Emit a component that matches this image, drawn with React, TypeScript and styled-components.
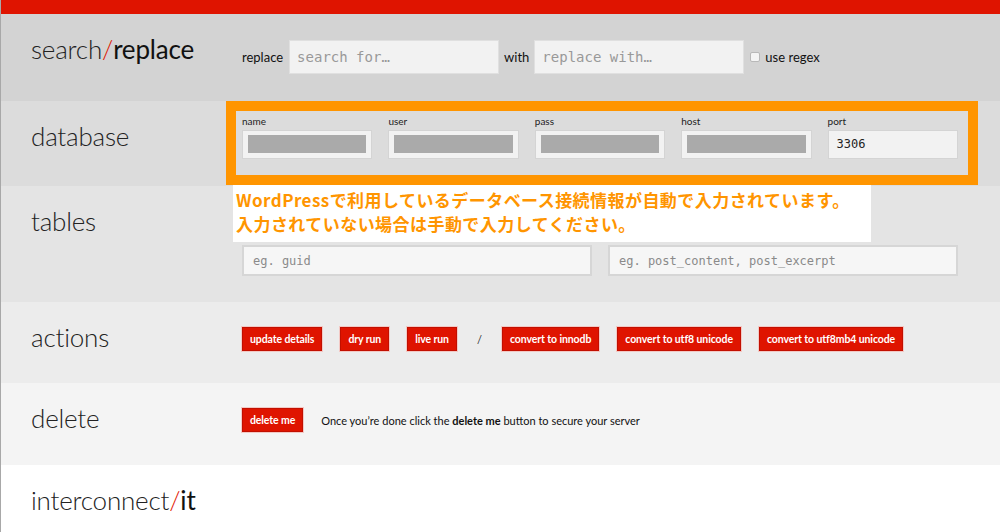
import styled, { createGlobalStyle } from 'styled-components'

const colors = {
    red: '#df1400',
    orange: '#ff9500',
    ink: '#1a1a1a',
    muted: '#8c8c8c',
}

const GlobalStyle = createGlobalStyle`
    html, body {
        margin: 0;
        padding: 0;
        background: #fff;
    }
    body {
        font-family: 'Lato', 'Liberation Sans', sans-serif;
        color: ${colors.ink};
        overflow: hidden;
    }
`

const Page = styled.div`
    width: 1000px;
    height: 532px;
    overflow: hidden;
    box-sizing: border-box;
    border-left: 1px solid #a8a8a8;
`

const TopBar = styled.div`
    height: 14px;
    background: ${colors.red};
`

const Section = styled.section<{ $bg: string; $h: number }>`
    position: relative;
    display: flex;
    align-items: flex-start;
    height: ${({ $h }) => $h}px;
    background: ${({ $bg }) => $bg};
    padding-left: 30px;
    box-sizing: border-box;
`

const Title = styled.h1`
    margin: 0;
    width: 211px;
    flex-shrink: 0;
    padding-top: 20px;
    font-size: 26px;
    line-height: 30px;
    font-weight: 300;
    letter-spacing: -0.2px;
    color: #222;
`

const Strong = styled.span`
    font-weight: 400;
    color: #111;
`

const Slash = styled.span`
    color: ${colors.red};
`

const Content = styled.div<{ $top: number }>`
    padding-top: ${({ $top }) => $top}px;
    width: 716px;
`

const Row = styled.div`
    display: flex;
    align-items: center;
`

const InlineLabel = styled.label<{ $gap?: number }>`
    font-size: 13px;
    color: #111;
    margin-right: ${({ $gap = 6 }) => $gap}px;
`

const TextInput = styled.input`
    box-sizing: border-box;
    width: 210px;
    height: 34px;
    margin-right: 5px;
    padding: 0 7px;
    border: 1px solid #e0e0e0;
    background: #f2f2f2;
    font-family: 'DejaVu Sans Mono', 'Liberation Mono', monospace;
    font-size: 14px;
    color: #333;
    outline: none;
    &::placeholder {
        color: #999;
    }
`

const CheckBox = styled.span`
    display: inline-block;
    width: 8px;
    height: 8px;
    margin: 0 5px 0 1px;
    border: 1px solid #b8b8b8;
    border-radius: 2px;
    background: #f4f4f4;
`

const FieldGrid = styled.div<{ $cols: number }>`
    display: grid;
    grid-template-columns: repeat(${({ $cols }) => $cols}, 1fr);
    column-gap: 16px;
`

const Field = styled.div`
    display: flex;
    flex-direction: column;
`

const SmallLabel = styled.span`
    font-size: 10px;
    line-height: 13px;
    color: #222;
    margin-bottom: 2px;
`

const ValueBox = styled.div`
    box-sizing: border-box;
    height: 29px;
    padding: 4px 5px;
    border: 1px solid #d4d4d4;
    background: #f2f2f2;
    font-family: 'DejaVu Sans Mono', 'Liberation Mono', monospace;
    font-size: 12px;
    line-height: 19px;
    color: #222;
    span {
        padding-left: 3px;
    }
`

const Mask = styled.div`
    height: 18px;
    background: #aaaaaa;
`

const WideInput = styled.input`
    box-sizing: border-box;
    width: 100%;
    height: 31px;
    padding: 0 9px;
    border: 2px solid #d6d6d6;
    background: #f6f6f6;
    font-family: 'DejaVu Sans Mono', 'Liberation Mono', monospace;
    font-size: 12px;
    outline: none;
    &::placeholder {
        color: #8a8a8a;
    }
`

const Buttons = styled.div`
    display: flex;
    align-items: center;
    gap: 18px;
`

const Button = styled.button`
    height: 24px;
    padding: 0 7px;
    border: 1px solid #c20f00;
    box-shadow: 0 0 0 1px #f3c8c4;
    background: ${colors.red};
    color: #fff;
    font-family: 'Lato', 'Liberation Sans', sans-serif;
    font-size: 10.5px;
    font-weight: 700;
    letter-spacing: -0.1px;
    cursor: pointer;
`

const Divider = styled.span`
    font-size: 11px;
    color: #333;
    margin: 0 2px;
`

const Hint = styled.p`
    margin: 0 0 0 18px;
    font-size: 11px;
    color: #111;
    b {
        font-weight: 700;
    }
`

/* annotation layered over the screenshot */
const Highlight = styled.div`
    position: absolute;
    left: 225px;
    top: 0;
    width: 752px;
    height: 84px;
    box-sizing: border-box;
    border: 10px solid ${colors.orange};
    pointer-events: none;
`

const Notice = styled.div`
    position: absolute;
    left: 232px;
    top: 84px;
    width: 638px;
    height: 57px;
    box-sizing: border-box;
    padding: 3px 0 0 3px;
    background: #fff;
    z-index: 2;
    color: ${colors.orange};
    font-family: 'Noto Sans CJK JP', 'Noto Sans', sans-serif;
    font-weight: 700;
    font-size: 17px;
    line-height: 24px;
    letter-spacing: 0.45px;
`

const dbFields = [
    { label: 'name' },
    { label: 'user' },
    { label: 'pass' },
    { label: 'host' },
    { label: 'port', value: '3306' },
]

const actions = ['update details', 'dry run', 'live run']
const converts = [
    'convert to innodb',
    'convert to utf8 unicode',
    'convert to utf8mb4 unicode',
]

export default function App() {
    return (
        <Page>
            <GlobalStyle />
            <TopBar />

            <Section $bg="#d3d3d3" $h={87}>
                <Title>
                    search<Slash>/</Slash>
                    <Strong>replace</Strong>
                </Title>
                <Content $top={26}>
                    <Row>
                        <InlineLabel>replace</InlineLabel>
                        <TextInput placeholder="search for…" />
                        <InlineLabel $gap={5}>with</InlineLabel>
                        <TextInput placeholder="replace with…" />
                        <CheckBox />
                        <InlineLabel>use regex</InlineLabel>
                    </Row>
                </Content>
            </Section>

            <Section $bg="#dcdcdc" $h={85}>
                <Title>database</Title>
                <Content $top={14}>
                    <FieldGrid $cols={5}>
                        {dbFields.map((f) => (
                            <Field key={f.label}>
                                <SmallLabel>{f.label}</SmallLabel>
                                <ValueBox>
                                    {f.value ? <span>{f.value}</span> : <Mask />}
                                </ValueBox>
                            </Field>
                        ))}
                    </FieldGrid>
                </Content>
                <Highlight />
                <Notice>
                    WordPressで利用しているデータベース接続情報が自動で入力されています。
                    <br />
                    入力されていない場合は手動で入力してください。
                </Notice>
            </Section>

            <Section $bg="#e4e4e4" $h={116}>
                <Title>tables</Title>
                <Content $top={44}>
                    <FieldGrid $cols={2}>
                        <Field>
                            <SmallLabel>
                                columns to search (optional, comma separated)
                            </SmallLabel>
                            <WideInput placeholder="eg. guid" />
                        </Field>
                        <Field>
                            <SmallLabel>
                                columns to exclude (optional, comma separated)
                            </SmallLabel>
                            <WideInput placeholder="eg. post_content, post_excerpt" />
                        </Field>
                    </FieldGrid>
                </Content>
            </Section>

            <Section $bg="#ececec" $h={81}>
                <Title>actions</Title>
                <Content $top={25}>
                    <Buttons>
                        {actions.map((a) => (
                            <Button key={a}>{a}</Button>
                        ))}
                        <Divider>/</Divider>
                        {converts.map((c) => (
                            <Button key={c}>{c}</Button>
                        ))}
                    </Buttons>
                </Content>
            </Section>

            <Section $bg="#f4f4f4" $h={82}>
                <Title>delete</Title>
                <Content $top={25}>
                    <Row>
                        <Button>delete me</Button>
                        <Hint>
                            Once you’re done click the <b>delete me</b> button
                            to secure your server
                        </Hint>
                    </Row>
                </Content>
            </Section>

            <Section $bg="#ffffff" $h={67}>
                <Title>
                    interconnect<Slash>/</Slash>
                    <Strong>it</Strong>
                </Title>
            </Section>
        </Page>
    )
}
